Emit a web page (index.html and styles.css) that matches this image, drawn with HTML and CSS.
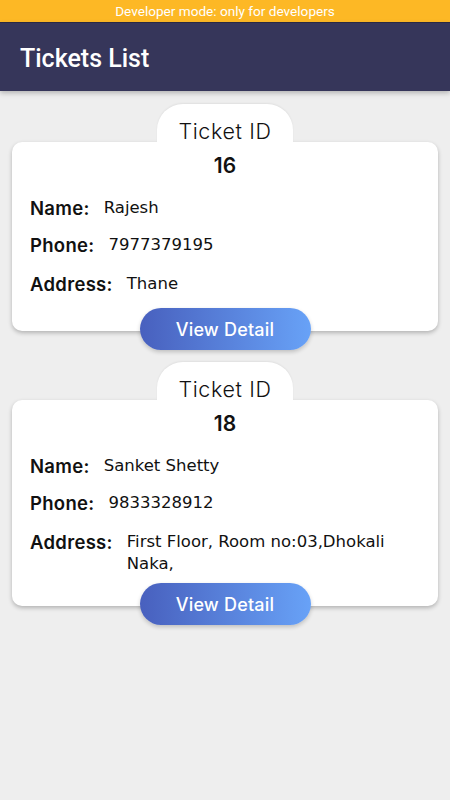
FILE: index.html
```html
<!DOCTYPE html>
<html lang="en">

<head>
    <meta charset="UTF-8">
    <meta name="viewport" content="width=device-width, initial-scale=1.0">
    <title>Tickets List</title>
    <link rel="stylesheet" href="styles.css">
</head>

<body>
    <div class="dev-banner">Developer mode: only for developers</div>
    <header class="app-bar">
        <h1>Tickets List</h1>
    </header>

    <main class="ticket-list">
        <div class="ticket">
            <div class="ticket-tab">Ticket ID</div>
            <div class="ticket-card">
                <div class="ticket-id">16</div>
                <div class="ticket-row">
                    <span class="label">Name:</span>
                    <span class="value">Rajesh</span>
                </div>
                <div class="ticket-row">
                    <span class="label">Phone:</span>
                    <span class="value">7977379195</span>
                </div>
                <div class="ticket-row">
                    <span class="label">Address:</span>
                    <span class="value">Thane</span>
                </div>
            </div>
            <button class="detail-button">View Detail</button>
        </div>

        <div class="ticket">
            <div class="ticket-tab">Ticket ID</div>
            <div class="ticket-card">
                <div class="ticket-id">18</div>
                <div class="ticket-row">
                    <span class="label">Name:</span>
                    <span class="value">Sanket Shetty</span>
                </div>
                <div class="ticket-row">
                    <span class="label">Phone:</span>
                    <span class="value">9833328912</span>
                </div>
                <div class="ticket-row">
                    <span class="label">Address:</span>
                    <span class="value">First Floor, Room no:03,Dhokali Naka,</span>
                </div>
            </div>
            <button class="detail-button">View Detail</button>
        </div>
    </main>
</body>

</html>
```

FILE: styles.css
```css
/* Basic layout */
body {
    background-color: #eeeeee;
    font-family: "DejaVu Sans", sans-serif;
    margin: 0;
    padding: 0;
    color: #111111;
}

.dev-banner {
    background-color: #fdb825;
    color: #ffffff;
    font-family: Roboto, sans-serif;
    font-size: 13.6px;
    text-align: center;
    height: 22px;
    line-height: 23px;
    border-bottom: 1px solid #2c2c48;
}

.app-bar {
    background-color: #36365a;
    height: 68px;
    display: flex;
    align-items: center;
    padding: 3px 20px 0 20px;
    box-sizing: border-box;
    box-shadow: 0 2px 5px rgba(0, 0, 0, 0.25);
}

.app-bar h1 {
    margin: 0;
    color: #ffffff;
    font-family: Roboto, sans-serif;
    font-weight: 500;
    font-size: 25px;
}

.ticket-list {
    padding: 13px 12px;
}

.ticket {
    display: flex;
    flex-direction: column;
    align-items: center;
    margin-bottom: 12px;
}

.ticket-tab {
    position: relative;
    z-index: 1;
    background-color: #ffffff;
    width: 136px;
    height: 38px;
    border-radius: 26px 26px 0 0;
    text-align: center;
    font-family: Inter, sans-serif;
    font-size: 21.5px;
    font-weight: 300;
    line-height: 55px;
    letter-spacing: 0.6px;
    box-shadow: 0 -1px 2px rgba(0, 0, 0, 0.06);
}

.ticket-card {
    align-self: stretch;
    background-color: #ffffff;
    border-radius: 10px;
    padding: 12px 18px 31px 18px;
    box-shadow: 0 2px 4px rgba(0, 0, 0, 0.25);
}

.ticket-id {
    text-align: center;
    font-family: Inter, sans-serif;
    font-size: 21px;
    font-weight: 600;
    line-height: 23px;
    margin-bottom: 15px;
}

.ticket-row {
    display: flex;
    align-items: flex-start;
    margin-top: 5px;
}

.ticket-row:last-child {
    margin-top: 7px;
}

.label {
    font-family: Inter, sans-serif;
    font-size: 18.5px;
    font-weight: 600;
    letter-spacing: 0.3px;
    line-height: 32px;
    margin-right: 14px;
    white-space: nowrap;
}

.value {
    font-size: 16.5px;
    line-height: 22px;
    padding-top: 5px;
}

.detail-button {
    position: relative;
    margin-top: -23px;
    width: 171px;
    height: 42px;
    border: none;
    border-radius: 21px;
    background: linear-gradient(to right, #4860be, #68a2f7);
    color: #ffffff;
    font-family: Inter, sans-serif;
    font-size: 18px;
    font-weight: 500;
    letter-spacing: 0.2px;
    box-shadow: 0 2px 4px rgba(0, 0, 0, 0.2);
    cursor: pointer;
}
```
